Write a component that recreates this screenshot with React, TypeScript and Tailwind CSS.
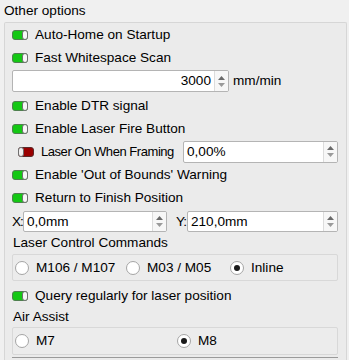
import React from 'react';

function Toggle({ on }: { on: boolean }) {
	if (on) {
		return (
			<svg width="16" height="10" viewBox="0 0 16 10" className="shrink-0">
				<rect x="0.5" y="0.5" width="15" height="9" rx="2.5" fill="#14c814" stroke="#4f7f4f" />
				<rect x="10.5" y="0.5" width="5" height="9" rx="2.5" fill="#f8f8f8" stroke="#6f6f6f" />
			</svg>
		);
	}
	return (
		<svg width="16" height="10" viewBox="0 0 16 10" className="shrink-0">
			<rect x="0.5" y="0.5" width="15" height="9" rx="2.5" fill="#9a0000" stroke="#5a2a2a" />
			<rect x="0.5" y="0.5" width="5" height="9" rx="2.5" fill="#f0eeee" stroke="#6f6f6f" />
		</svg>
	);
}

function Check({ label, on = true }: { label: string; on?: boolean }) {
	return (
		<div className="flex items-center h-[23px] gap-[7px] whitespace-nowrap">
			<Toggle on={on} />
			<span>{label}</span>
		</div>
	);
}

function Arrows() {
	return (
		<div className="flex flex-col items-center justify-center w-[14px] border-l border-[#dcdcdc] bg-[#f7f7f7] gap-[3px]">
			<svg width="7" height="4" viewBox="0 0 7 4">
				<path d="M0 4 L3.5 0 L7 4 Z" fill="#6a6a6a" />
			</svg>
			<svg width="7" height="4" viewBox="0 0 7 4">
				<path d="M0 0 L3.5 4 L7 0 Z" fill="#9a9a9a" />
			</svg>
		</div>
	);
}

function SpinBox({ value, right = false, className = '' }: { value: string; right?: boolean; className?: string }) {
	return (
		<div className={`flex shrink-0 bg-white border border-[#b4b4b4] rounded-[2px] overflow-hidden ${className}`}>
			<div className={`flex-1 flex items-center px-[3px] ${right ? 'justify-end' : ''}`}>{value}</div>
			<Arrows />
		</div>
	);
}

function Radio({ label, checked = false }: { label: string; checked?: boolean }) {
	return (
		<div className="flex items-center gap-[7px] whitespace-nowrap">
			<span className="w-[14px] h-[14px] rounded-full border border-[#a5a5a5] bg-white flex items-center justify-center">
				{checked && <span className="w-[6px] h-[6px] rounded-full bg-[#1a1a1a]" />}
			</span>
			<span>{label}</span>
		</div>
	);
}

export default function App() {
	return (
		<div
			className="w-[349px] h-[360px] bg-[#f0f0f0] text-black text-[13.6px] leading-[18px] overflow-hidden"
			style={{ fontFamily: '"Liberation Sans", Arial, sans-serif' }}
		>
			<div className="h-[22px] flex items-center pl-[4px]">Other options</div>
			<div className="ml-[4px] w-[343px] h-[338px] border-l border-t border-r border-[#d6d6d6] rounded-t-[2px] bg-[#ebebeb] pl-[7px] pr-[8px]">
				<Check label="Auto-Home on Startup" />
				<Check label="Fast Whitespace Scan" />
				<div className="flex items-center mt-[1px] h-[22px]">
					<SpinBox value="3000" right className="w-[217px] h-[22px]" />
					<span className="ml-[4px]">mm/min</span>
				</div>
				<div className="h-[2px]" />
				<Check label="Enable DTR signal" />
				<Check label="Enable Laser Fire Button" />
				<div className="flex items-center h-[23px]">
					<div className="flex items-center gap-[7px] pl-[6px] w-[171px] whitespace-nowrap">
						<Toggle on={false} />
						<span className="text-[13px] tracking-[-0.45px]">Laser On When Framing</span>
					</div>
					<SpinBox value="0,00%" className="w-[155px] h-[22px]" />
				</div>
				<Check label="Enable 'Out of Bounds' Warning" />
				<Check label="Return to Finish Position" />
				<div className="flex items-center h-[21px] mt-[2px] whitespace-nowrap">
					<span className="w-[11px] tracking-[-1px]">X:</span>
					<SpinBox value="0,0mm" className="w-[144px] h-[21px]" />
					<span className="ml-[9px] w-[11px] tracking-[-1px]">Y:</span>
					<SpinBox value="210,0mm" className="w-[151px] h-[21px]" />
				</div>
				<div className="h-[22px] flex items-center pl-[1px]">Laser Control Commands</div>
				<div className="h-[27px] border border-[#d8d8d8] rounded-[2px] bg-[#ececec] flex items-center pl-[2px] w-[326px]">
					<div className="w-[111px]"><Radio label="M106 / M107" /></div>
					<div className="w-[104px]"><Radio label="M03 / M05" /></div>
					<Radio label="Inline" checked />
				</div>
				<div className="h-[3px]" />
				<Check label="Query regularly for laser position" />
				<div className="h-[20px] flex items-center pl-[1px]">Air Assist</div>
				<div className="h-[28px] border border-[#d8d8d8] rounded-[2px] bg-[#ececec] flex items-center pl-[2px] w-[326px]">
					<div className="w-[162px]"><Radio label="M7" /></div>
					<Radio label="M8" checked />
				</div>
				<div className="mt-[2px] w-[326px] border-t border-[#9a9a9a]" />
			</div>
		</div>
	);
}
